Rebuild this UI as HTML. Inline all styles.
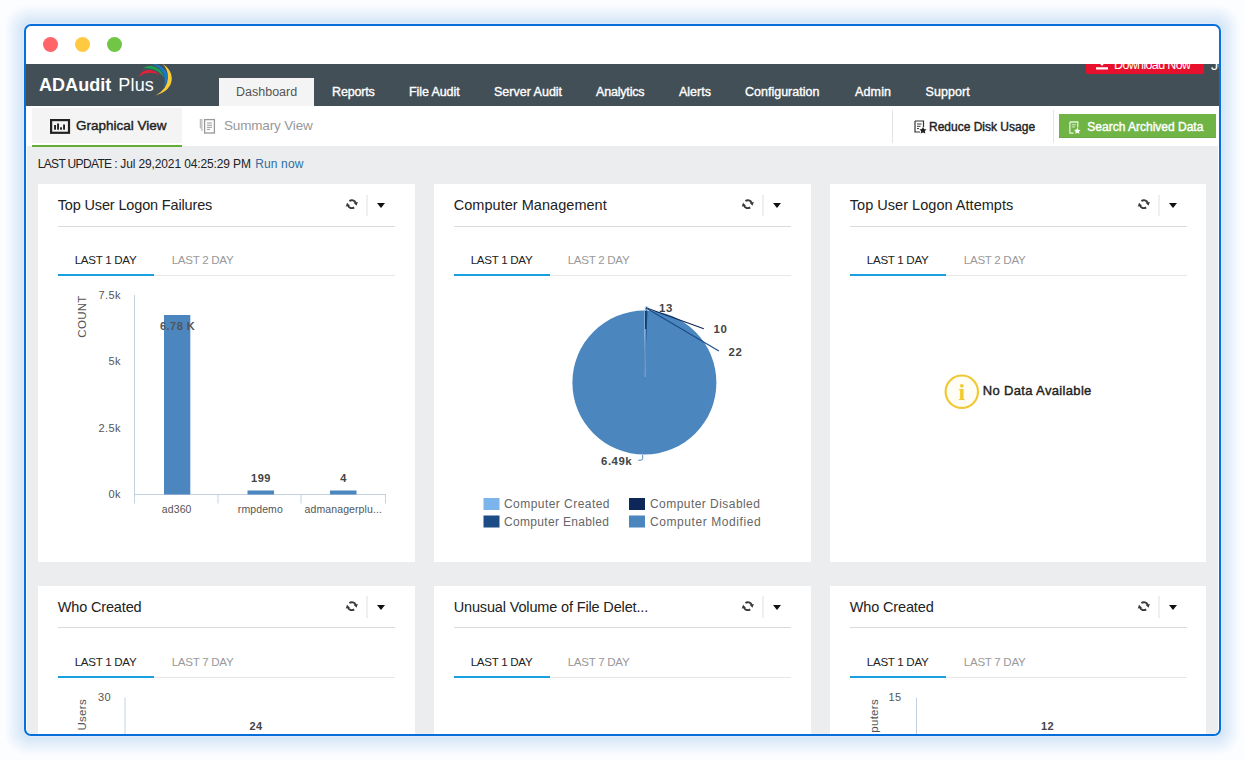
<!DOCTYPE html>
<html lang="en">
<head>
<meta charset="utf-8">
<title>ADAudit Plus - Dashboard</title>
<style>
*{box-sizing:border-box;margin:0;padding:0}
html,body{width:1245px;height:760px;overflow:hidden}
body{background:#fbfdff;font-family:"Liberation Sans",sans-serif;color:#222;position:relative}
.abs{position:absolute;white-space:nowrap;line-height:1}
#frame{position:absolute;left:24px;top:24px;width:1197px;height:712px;border:2px solid #076fdb;border-radius:7px;background:#fff;
 box-shadow:0 0 0 1px rgb(222,236,250),0 0 0 2px rgb(214,231,248),0 0 0 3px rgb(216,232,248),0 0 0 4px rgb(218,233,248),0 0 0 5px rgb(220,235,249),0 0 0 6px rgb(223,236,249),0 0 0 7px rgb(225,237,250),0 0 0 8px rgb(227,238,250),0 0 0 9px rgb(229,240,251),0 0 0 10px rgb(231,241,251),0 0 0 11px rgb(233,242,251),0 0 0 12px rgb(235,244,252),0 0 0 13px rgb(237,245,252),0 0 0 14px rgb(239,246,253),0 0 0 15px rgb(242,247,253),0 0 0 16px rgb(244,249,254),0 0 0 17px rgb(246,250,254),0 0 0 18px rgb(248,251,254),0 0 0 19px rgb(250,252,255);overflow:hidden}
#win{position:absolute;left:-26px;top:-26px;width:1245px;height:760px}
.dot{position:absolute;top:37px;width:15px;height:15px;border-radius:50%}
#nav{position:absolute;left:26px;top:64px;width:1193px;height:42px;background:#434f57}
#sub{position:absolute;left:26px;top:106px;width:1193px;height:40px;background:#fff}
#content{position:absolute;left:27px;top:146px;width:1191px;height:588px;background:#ecedee}
.nt{position:absolute;top:85px;font-size:12.5px;color:#fff;line-height:14px;white-space:nowrap;-webkit-text-stroke:.35px #fff}
.sb{-webkit-text-stroke:.4px currentColor}
.card{position:absolute;width:377.4px;height:378px;background:#fff}
.card .title{position:absolute;left:20px;top:12px;font-size:14.5px;letter-spacing:-.15px;line-height:18px;color:#222;white-space:nowrap}
.card .hl{position:absolute;left:20px;top:41.6px;width:337px;height:1.2px;background:#dadada}
.card .tl{position:absolute;left:20px;top:91px;width:337px;height:1px;background:#e7e7e7}
.card .ul{position:absolute;left:20px;top:90px;width:96px;height:2px;background:#1a9fe0}
.card .t1,.card .t2{position:absolute;top:70px;font-size:11.6px;line-height:12px;white-space:nowrap;letter-spacing:-.3px}
.card .t1{left:37px;color:#222}
.card .t2{left:134px;color:#999}
.card .sep{position:absolute;left:328.5px;top:10.5px;width:1.5px;height:21.5px;background:#efefef}
.card svg.ref{position:absolute;left:307px;top:14px}
.card .caret{position:absolute;left:339.3px;top:19px;width:0;height:0;border-left:4px solid transparent;border-right:4px solid transparent;border-top:5px solid #111}
svg text{font-family:"Liberation Sans",sans-serif}
</style>
</head>
<body>
<div id="frame"><div id="win">
  <div class="dot" style="left:43px;background:#ff6568"></div>
  <div class="dot" style="left:75px;background:#ffca42"></div>
  <div class="dot" style="left:107px;background:#71c547"></div>

  <div id="nav"></div>
  <!-- logo -->
  <div class="abs" id="logo" style="left:39px;top:74px;font-size:18px;line-height:22px;color:#fff"><b style="letter-spacing:.05px">ADAudit</b><span style="margin-left:7px;letter-spacing:.15px">Plus</span></div>
  <svg class="abs" style="left:130px;top:64px" width="50" height="36" viewBox="0 4 50 36">
    <path d="M8.7 17 Q11.5 10.2 18 10 Q25 9.8 29.6 14.8 Q24 12.6 18.2 12.9 Q12.5 13.3 8.7 17Z" fill="#de2139"/>
    <path d="M12.8 8.6 Q16.5 5.4 22 5.9 Q31 7.2 34.3 18 Q29 10.4 22 8.9 Q17 8 12.8 8.6Z" fill="#1e9d57"/>
    <path d="M21.5 3.5 Q33 4.5 37.2 13.5 Q39.8 20 34 27 Q36 19.5 33.2 13.5 Q30 7 21.5 3.5Z" fill="#1878c8"/>
    <path d="M32.4 3.8 Q41.2 9 41.8 18 Q41.8 30.5 25.6 35.4 Q37.4 29 38 18 Q38.2 9.5 32.4 3.8Z" fill="#fccc36"/>
  </svg>
  <div class="abs" style="left:219px;top:78px;width:95px;height:28px;background:#f4f4f4"></div>
  <div class="nt" style="left:236px;color:#555;-webkit-text-stroke:0">Dashboard</div>
  <div class="nt" style="left:332px;letter-spacing:-.15px">Reports</div>
  <div class="nt" style="left:409px;letter-spacing:-.09px">File Audit</div>
  <div class="nt" style="left:494px">Server Audit</div>
  <div class="nt" style="left:596px;letter-spacing:-.18px">Analytics</div>
  <div class="nt" style="left:679px">Alerts</div>
  <div class="nt" style="left:745px">Configuration</div>
  <div class="nt" style="left:855px;letter-spacing:.16px">Admin</div>
  <div class="nt" style="left:925.5px;letter-spacing:.07px">Support</div>
  <!-- download now (clipped) -->
  <div class="abs" style="left:1086px;top:64px;width:118px;height:9.5px;background:#e8112d;border-radius:0 0 2px 2px"></div>
  <div class="abs" style="left:1114px;top:58px;font-size:12.5px;color:#fff;line-height:14px;letter-spacing:-.64px;clip-path:inset(6px 0 0 0)">Download Now</div>
  <svg class="abs" style="left:1095px;top:64px" width="14" height="8" viewBox="0 4 14 8"><path d="M1 7.2h12v2.3H1z M3.5 2h7l-3.5 4z" fill="#fff"/></svg>
  <div class="abs" style="left:1211px;top:58px;font-size:14.5px;color:#fff;line-height:14px;clip-path:inset(6px 0 0 0)">Jo</div>

  <div id="sub"></div>
  <div class="abs" style="left:32px;top:108px;width:150px;height:35px;background:#f4f4f4"></div>
  <div class="abs" style="left:32px;top:144.5px;width:150px;height:2.5px;background:#62ad35;z-index:3"></div>
  <svg class="abs" style="left:49px;top:118px" width="22" height="17" viewBox="0 0 22 17">
    <rect x="2.1" y="2.1" width="17.9" height="12.7" fill="none" stroke="#222" stroke-width="2.2"/>
    <rect x="5.1" y="7" width="1.9" height="4.7" fill="#222"/><rect x="8.1" y="5.5" width="1.9" height="6.2" fill="#222"/>
    <rect x="11.1" y="9.3" width="1.9" height="2.4" fill="#222"/><rect x="14.1" y="6.5" width="1.9" height="5.2" fill="#222"/>
  </svg>
  <div class="abs sb" id="gv" style="left:76px;top:118px;font-size:13.5px;line-height:16px;color:#222">Graphical View</div>
  <svg class="abs" style="left:199px;top:118px" width="17" height="17" viewBox="0 0 17 17">
    <path d="M1.3 1v9.5M2.9 1v12" stroke="#aaa" stroke-width="1" fill="none"/>
    <rect x="5.6" y="1.6" width="9.8" height="13.4" fill="#fff" stroke="#999" stroke-width="1.3"/>
    <path d="M8 5h5M8 7.2h5M8 9.3h5M8 11.4h3" stroke="#999" stroke-width="1" fill="none"/>
  </svg>
  <div class="abs" id="sv" style="left:224px;top:118px;font-size:13.5px;line-height:16px;color:#999;letter-spacing:-.16px">Summary View</div>

  <div class="abs" style="left:892px;top:110px;width:1px;height:33px;background:#e4e4e4"></div>
  <div class="abs" style="left:1053px;top:110px;width:1px;height:33px;background:#e4e4e4"></div>
  <svg class="abs" style="left:914px;top:120px" width="13" height="14" viewBox="0 0 13 14">
    <path d="M1 1h8.5v6M1 1v11h5" stroke="#333" stroke-width="1.2" fill="none"/>
    <path d="M3 4h4.5M3 6.3h3.5M3 8.6h2" stroke="#333" stroke-width="1" fill="none"/>
    <path d="M9 6.8l1.1 2.3 2.5.3-1.8 1.7.5 2.5L9 12.4l-2.3 1.2.5-2.5-1.8-1.7 2.5-.3z" fill="#222"/>
  </svg>
  <div class="abs sb" id="rdu" style="left:929px;top:119px;font-size:12px;line-height:16px;color:#222">Reduce Disk Usage</div>
  <div class="abs" style="left:1059px;top:114px;width:157px;height:24px;background:#70b446;border-bottom:1px solid #68a845"></div>
  <svg class="abs" style="left:1069.3px;top:120.6px" width="12" height="14" viewBox="0 0 13 15">
    <path d="M1 1h8.5v6M1 1v12h4" stroke="#e6f3dc" stroke-width="1.4" fill="none"/>
    <path d="M3 4h4.5M3 6.3h3.5" stroke="#e6f3dc" stroke-width="1" fill="none"/>
    <path d="M9 7l1.1 2.3 2.5.3-1.8 1.7.5 2.5L9 12.6l-2.3 1.2.5-2.5-1.8-1.7 2.5-.3z" fill="#fff"/>
  </svg>
  <div class="abs sb" id="sad" style="left:1087.3px;top:118.5px;font-size:12px;line-height:16px;color:#fff">Search Archived Data</div>

  <div id="content"></div>
  <div class="abs" id="lu" style="left:37.7px;top:157px;font-size:12px;line-height:14px;color:#222"><span style="letter-spacing:-.65px">LAST UPDATE :</span><span style="letter-spacing:-.13px;margin-left:3.5px">Jul 29,2021 04:25:29 PM</span><span style="color:#2e6da4;letter-spacing:.14px;margin-left:4.4px">Run now</span></div>

  <!--CARDS-->
<div class="card" style="left:37.7px;top:184px"><div class="title">Top User Logon Failures</div><svg class="ref" width="14" height="12" viewBox="0 0 14 12"><path d="M4.4 3A4.2 4.2 0 0 1 10.7 4.9" fill="none" stroke="#3a3a3a" stroke-width="1.9"/><path d="M8.6 4.7L12.9 3.9L11.5 7.7z" fill="#3a3a3a"/><path d="M9.2 9.4A4.2 4.2 0 0 1 2.9 7.5" fill="none" stroke="#3a3a3a" stroke-width="1.9"/><path d="M5 7.7L0.7 8.5L2.1 4.7z" fill="#3a3a3a"/></svg><div class="sep"></div><div class="caret"></div><div class="hl"></div>
    <div class="t1">LAST 1 DAY</div><div class="t2">LAST 2 DAY</div><div class="tl"></div><div class="ul"></div>
  <svg class="abs" style="left:0;top:0" width="377" height="377" viewBox="0 0 377 377">
    <path d="M96.5 111v208.5M96 310.5h252M180 310.5v9M263 310.5v9M347.5 310.5v9" stroke="#c4d2e0" stroke-width="1" fill="none"/>
    <rect x="126" y="131" width="26.3" height="179.5" fill="#4b86be"/>
    <rect x="209.5" y="306.5" width="26.5" height="4" fill="#4b86be"/>
    <rect x="292" y="306.5" width="26.5" height="4" fill="#4b86be"/>
    <g font-size="11" fill="#555" text-anchor="end" letter-spacing="0.4">
      <text x="83" y="115">7.5k</text><text x="83" y="181">5k</text><text x="83" y="248">2.5k</text><text x="83" y="313.7">0k</text>
    </g>
    <text transform="translate(47.5 132.5) rotate(-90)" text-anchor="middle" font-size="11.5" fill="#555" letter-spacing="0.3">COUNT</text>
    <g font-size="11" font-weight="bold" fill="#444" text-anchor="middle" letter-spacing="0.5">
      <text x="139.6" y="145.8" fill="#50555c">6.78 K</text><text x="223" y="298.3">199</text><text x="305.5" y="298.3">4</text>
    </g>
    <g font-size="10.5" fill="#555" text-anchor="middle" letter-spacing="0.1">
      <text x="138.7" y="328.8">ad360</text><text x="222.4" y="328.8">rmpdemo</text><text x="305.3" y="328.8">admanagerplu...</text>
    </g>
  </svg>
</div>
<div class="card" style="left:433.7px;top:184px"><div class="title" style="letter-spacing:0.04px">Computer Management</div><svg class="ref" width="14" height="12" viewBox="0 0 14 12"><path d="M4.4 3A4.2 4.2 0 0 1 10.7 4.9" fill="none" stroke="#3a3a3a" stroke-width="1.9"/><path d="M8.6 4.7L12.9 3.9L11.5 7.7z" fill="#3a3a3a"/><path d="M9.2 9.4A4.2 4.2 0 0 1 2.9 7.5" fill="none" stroke="#3a3a3a" stroke-width="1.9"/><path d="M5 7.7L0.7 8.5L2.1 4.7z" fill="#3a3a3a"/></svg><div class="sep"></div><div class="caret"></div><div class="hl"></div>
    <div class="t1">LAST 1 DAY</div><div class="t2">LAST 2 DAY</div><div class="tl"></div><div class="ul"></div>
  <svg class="abs" style="left:0;top:0" width="377" height="377" viewBox="0 0 377 377">
    <circle cx="210.4" cy="198.6" r="72" fill="#4b86be"/>
    <path d="M210.4 198.6L210.40 126.60A72 72 0 0 1 211.30 126.61Z" fill="#9cc4ee"/><path d="M210.4 198.6L211.30 126.61A72 72 0 0 1 211.99 126.62Z" fill="#0d2758"/><path d="M210.4 198.6L211.99 126.62A72 72 0 0 1 213.51 126.67Z" fill="#1c4c86"/>
    <path d="M211.4 145L211 193" stroke="#a9c6e6" stroke-width="0.9" fill="none" opacity=".75"/>
    <path d="M211.9 124L211.6 145" stroke="#163a72" stroke-width="1.3" fill="none"/>
    <path d="M211.4 127V123H214.5" stroke="#8fbde9" stroke-width="1" fill="none"/>
    <path d="M212 123.7L269.8 144.7" stroke="#0d2758" stroke-width="1.1" fill="none"/>
    <path d="M212 124L284.9 167" stroke="#1c4c86" stroke-width="1.1" fill="none"/>
    <path d="M208.7 271V274.6Q208.7 276.2 206.8 276.2H204.3" stroke="#4b86be" stroke-width="1" fill="none"/>
    <g font-size="11.4" font-weight="bold" fill="#444" letter-spacing="0.55">
      <text x="225" y="127.5">13</text><text x="279.5" y="149.3">10</text><text x="294.5" y="172.3">22</text><text x="167" y="280.7">6.49k</text>
    </g>
    <rect x="49.5" y="314" width="16" height="12" fill="#7cb5ec"/><rect x="195" y="314" width="16" height="12" fill="#0d2758"/>
    <rect x="49.5" y="331.5" width="16" height="12" fill="#1c4c86"/><rect x="195" y="331.5" width="16" height="12" fill="#4b86be"/>
    <g font-size="12" fill="#666" letter-spacing="0.45">
      <text x="70" y="324.3">Computer Created</text><text x="216" y="324.3">Computer Disabled</text>
      <text x="70" y="341.7" letter-spacing="0.33">Computer Enabled</text><text x="216" y="341.7" letter-spacing="0.58">Computer Modified</text>
    </g>
  </svg>
</div>
<div class="card" style="left:829.8px;top:184px;width:376.5px"><div class="title" style="letter-spacing:0.03px">Top User Logon Attempts</div><svg class="ref" width="14" height="12" viewBox="0 0 14 12"><path d="M4.4 3A4.2 4.2 0 0 1 10.7 4.9" fill="none" stroke="#3a3a3a" stroke-width="1.9"/><path d="M8.6 4.7L12.9 3.9L11.5 7.7z" fill="#3a3a3a"/><path d="M9.2 9.4A4.2 4.2 0 0 1 2.9 7.5" fill="none" stroke="#3a3a3a" stroke-width="1.9"/><path d="M5 7.7L0.7 8.5L2.1 4.7z" fill="#3a3a3a"/></svg><div class="sep"></div><div class="caret"></div><div class="hl"></div>
    <div class="t1">LAST 1 DAY</div><div class="t2">LAST 2 DAY</div><div class="tl"></div><div class="ul"></div>
  <svg class="abs" style="left:114px;top:190px" width="36" height="36" viewBox="0 0 36 36"><circle cx="17.8" cy="17.7" r="16.2" fill="#fffdf4" stroke="#efc935" stroke-width="2.2"/>
  <text x="17.8" y="25.6" text-anchor="middle" font-size="24" font-weight="bold" fill="#efc935" style="font-family:'Liberation Serif',serif">i</text></svg>
  <div class="abs nd sb" style="left:153px;top:199px;font-size:13px;line-height:16px;color:#222;letter-spacing:.34px">No Data Available</div>
</div>
<div class="card" style="left:37.7px;top:585.6px"><div class="title">Who Created</div><svg class="ref" width="14" height="12" viewBox="0 0 14 12"><path d="M4.4 3A4.2 4.2 0 0 1 10.7 4.9" fill="none" stroke="#3a3a3a" stroke-width="1.9"/><path d="M8.6 4.7L12.9 3.9L11.5 7.7z" fill="#3a3a3a"/><path d="M9.2 9.4A4.2 4.2 0 0 1 2.9 7.5" fill="none" stroke="#3a3a3a" stroke-width="1.9"/><path d="M5 7.7L0.7 8.5L2.1 4.7z" fill="#3a3a3a"/></svg><div class="sep"></div><div class="caret"></div><div class="hl"></div>
    <div class="t1">LAST 1 DAY</div><div class="t2">LAST 7 DAY</div><div class="tl"></div><div class="ul"></div>
  <svg class="abs" style="left:0;top:0" width="377" height="377" viewBox="0 0 377 377">
    <path d="M87 111.5v200" stroke="#c4d2e0" stroke-width="1" fill="none"/>
    <text x="73" y="114.7" font-size="11" fill="#555" text-anchor="end" letter-spacing="0.4">30</text>
    <text transform="translate(48 113) rotate(-90)" text-anchor="end" font-size="11.5" fill="#555" letter-spacing="0.3">No. of Users</text>
    <text x="218" y="144" font-size="11" font-weight="bold" fill="#444" text-anchor="middle" letter-spacing="0.5">24</text>
    <rect x="205" y="151" width="26.3" height="160" fill="#4b86be"/>
  </svg>
</div>
<div class="card" style="left:433.7px;top:585.6px"><div class="title">Unusual Volume of File Delet...</div><svg class="ref" width="14" height="12" viewBox="0 0 14 12"><path d="M4.4 3A4.2 4.2 0 0 1 10.7 4.9" fill="none" stroke="#3a3a3a" stroke-width="1.9"/><path d="M8.6 4.7L12.9 3.9L11.5 7.7z" fill="#3a3a3a"/><path d="M9.2 9.4A4.2 4.2 0 0 1 2.9 7.5" fill="none" stroke="#3a3a3a" stroke-width="1.9"/><path d="M5 7.7L0.7 8.5L2.1 4.7z" fill="#3a3a3a"/></svg><div class="sep"></div><div class="caret"></div><div class="hl"></div>
    <div class="t1">LAST 1 DAY</div><div class="t2">LAST 7 DAY</div><div class="tl"></div><div class="ul"></div></div>
<div class="card" style="left:829.8px;top:585.6px;width:376.5px"><div class="title">Who Created</div><svg class="ref" width="14" height="12" viewBox="0 0 14 12"><path d="M4.4 3A4.2 4.2 0 0 1 10.7 4.9" fill="none" stroke="#3a3a3a" stroke-width="1.9"/><path d="M8.6 4.7L12.9 3.9L11.5 7.7z" fill="#3a3a3a"/><path d="M9.2 9.4A4.2 4.2 0 0 1 2.9 7.5" fill="none" stroke="#3a3a3a" stroke-width="1.9"/><path d="M5 7.7L0.7 8.5L2.1 4.7z" fill="#3a3a3a"/></svg><div class="sep"></div><div class="caret"></div><div class="hl"></div>
    <div class="t1">LAST 1 DAY</div><div class="t2">LAST 7 DAY</div><div class="tl"></div><div class="ul"></div>
  <svg class="abs" style="left:0;top:0" width="377" height="377" viewBox="0 0 377 377">
    <path d="M86.5 111.5v200" stroke="#c4d2e0" stroke-width="1" fill="none"/>
    <text x="71.5" y="114.7" font-size="11" fill="#555" text-anchor="end" letter-spacing="0.4">15</text>
    <text transform="translate(48 113) rotate(-90)" text-anchor="end" font-size="11.5" fill="#555" letter-spacing="0.3">No. of Computers</text>
    <text x="217.5" y="144" font-size="11" font-weight="bold" fill="#444" text-anchor="middle" letter-spacing="0.5">12</text>
    <rect x="204" y="151" width="26.3" height="160" fill="#4b86be"/>
  </svg>
</div>
<!--/CARDS-->
</div></div>
</body>
</html>
